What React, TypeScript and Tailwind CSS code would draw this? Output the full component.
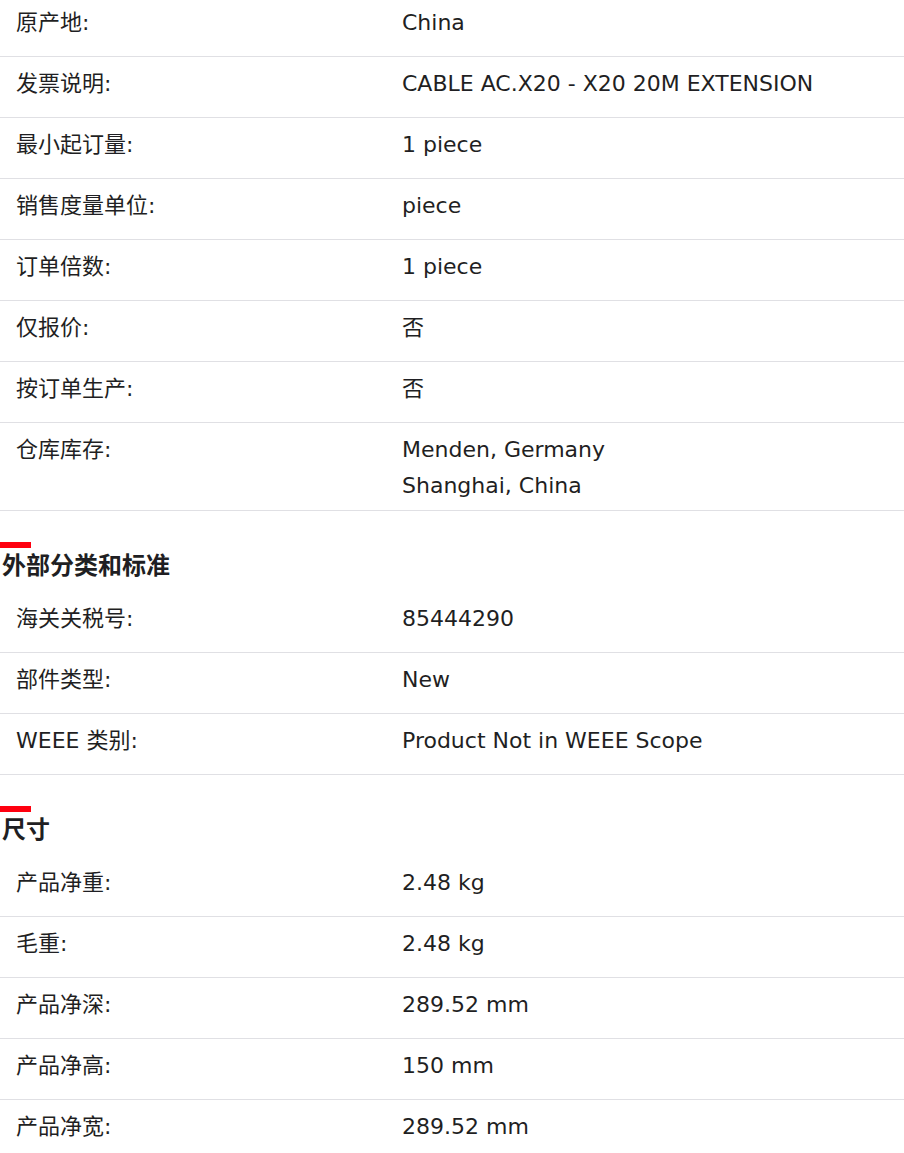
type Row = { label: string; values: string[] };

const general: Row[] = [
  { label: "原产地:", values: ["China"] },
  { label: "发票说明:", values: ["CABLE AC.X20 - X20 20M EXTENSION"] },
  { label: "最小起订量:", values: ["1 piece"] },
  { label: "销售度量单位:", values: ["piece"] },
  { label: "订单倍数:", values: ["1 piece"] },
  { label: "仅报价:", values: ["否"] },
  { label: "按订单生产:", values: ["否"] },
  { label: "仓库库存:", values: ["Menden, Germany", "Shanghai, China"] },
];

const classification: Row[] = [
  { label: "海关关税号:", values: ["85444290"] },
  { label: "部件类型:", values: ["New"] },
  { label: "WEEE 类别:", values: ["Product Not in WEEE Scope"] },
];

const dimensions: Row[] = [
  { label: "产品净重:", values: ["2.48 kg"] },
  { label: "毛重:", values: ["2.48 kg"] },
  { label: "产品净深:", values: ["289.52 mm"] },
  { label: "产品净高:", values: ["150 mm"] },
  { label: "产品净宽:", values: ["289.52 mm"] },
];

const SpecRow = ({ row }: { row: Row }) => (
  <div className="flex border-b border-[#e0e0e4] pt-[9px] pb-[6px] min-h-[61px]">
    <div className="w-[402px] shrink-0 pl-4 leading-[36px]">{row.label}</div>
    <div className="flex flex-col leading-[36px]">
      {row.values.map((v) => (
        <span key={v}>{v}</span>
      ))}
    </div>
  </div>
);

const Heading = ({ title }: { title: string }) => (
  <div className="pt-[31px]">
    <div className="w-[31px] h-[6px] bg-[#ff000f]" />
    <h3 className="pl-[2px] mt-[2px] mb-[10px] text-[24px] font-bold leading-[32px]">{title}</h3>
  </div>
);

export default function App() {
  return (
    <div
      className="w-[904px] h-[1153px] overflow-hidden bg-white text-[22px] text-[#1f1f23]"
      style={{ fontFamily: '"DejaVu Sans", "Noto Sans CJK SC", sans-serif' }}
    >
      <div className="-mt-[4px]">
        {general.map((r) => (
          <SpecRow key={r.label} row={r} />
        ))}
      </div>
      <Heading title="外部分类和标准" />
      {classification.map((r) => (
        <SpecRow key={r.label} row={r} />
      ))}
      <Heading title="尺寸" />
      {dimensions.map((r) => (
        <SpecRow key={r.label} row={r} />
      ))}
    </div>
  );
}
